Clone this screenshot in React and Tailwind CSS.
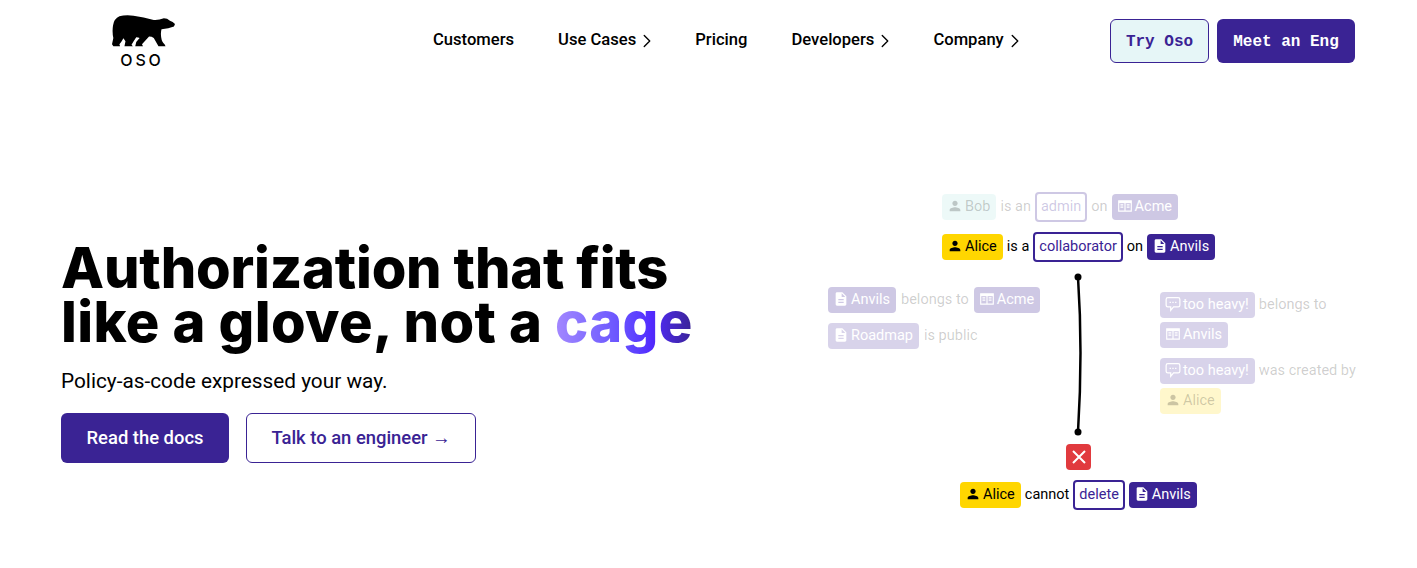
import { ChevronRight } from 'lucide-react';
import { MdPerson, MdDescription } from 'react-icons/md';

const navItems = [
  { label: 'Customers' },
  { label: 'Use Cases', more: true },
  { label: 'Pricing' },
  { label: 'Developers', more: true },
  { label: 'Company', more: true },
];

const chipStyles = {
  actor: 'bg-[#ffd600] text-black',
  actorFaded: 'bg-[#ffd600]/20 text-black/20',
  actorMint: 'bg-[#e6f6f5]/70 text-black/20',
  resource: 'bg-[#3a2394] text-white',
  resourceFaded: 'bg-[#3a2394]/25 text-white',
  resourcePale: 'bg-[#3a2394]/20 text-white',
};

// two pane book used for organizations
function OrgIcon({ size, className }) {
  return (
    <svg viewBox="0 0 14 14" width={size} height={size} className={className} fill="none" stroke="currentColor" strokeWidth="1">
      <path d="M1.5 2.5 H12.5 V11.5 H1.5 Z M7 2.5 V11.5 M8.5 6 H11 M8.5 8 H11 M3 6 H5.5 M3 8 H5.5" />
      <path d="M1.5 3.5 H12.5" strokeWidth="2" />
    </svg>
  );
}

function CommentIcon({ size, className }) {
  return (
    <svg viewBox="0 0 14 14" width={size} height={size} className={className} fill="none" stroke="currentColor" strokeWidth="1.1">
      <path d="M2.5 1.5 H11.5 Q13 1.5 13 3 V8 Q13 9.5 11.5 9.5 H7.5 L5 12.5 V9.5 H2.5 Q1 9.5 1 8 V3 Q1 1.5 2.5 1.5 Z" />
      <path d="M4 5.5 H10" strokeDasharray="1.2 1.2" />
    </svg>
  );
}

function Chip({ icon: Icon, kind, children }) {
  return (
    <span className={`inline-flex h-[26px] items-center gap-[2px] rounded-[4px] pr-[6px] pl-[5px] text-[14.5px] leading-none ${chipStyles[kind]}`}>
      <Icon size={16} className="-mt-[3px] shrink-0" />
      {children}
    </span>
  );
}

function Role({ faded, children }) {
  return (
    <span className={`inline-flex h-[30px] items-center rounded-[4px] border-2 bg-white px-[4px] text-[14.5px] ${faded ? 'border-[#3a2394]/25 text-[#3a2394]/25' : 'border-[#3a2394] text-[#3a2394]'}`}>
      {children}
    </span>
  );
}

function Word({ faded, children }) {
  return <span className={`text-[14.5px] ${faded ? 'text-black/20' : 'text-black'}`}>{children}</span>;
}

function BearLogo() {
  return (
    <svg viewBox="66 44 190 95" className="h-[32px] w-[64px]" fill="black">
      <path d="M253 71 Q247 64 238 61 Q230 54 220 54 Q205 60 190 59 Q160 50 130 46 Q105 43 88 48 Q72 55 69 75 Q66 95 70 112 L66 131 L70 137 L90 137 L88 131 Q94 124 100 113 L106 122 L103 137 L128 137 L124 132 Q130 122 138 110 Q144 110 148 112 L138 124 L135 137 L158 137 L155 131 L176 108 Q184 108 190 112 L204 137 L225 137 L222 131 Q214 125 212 110 Q210 96 213 86 L233 83 L250 78 Z" />
    </svg>
  );
}

function Header() {
  return (
    <header className="flex h-[82px] items-start pl-[112px] pr-[62px]">
      <div className="flex w-[321px] flex-col pt-[15px]">
        <div className="w-[64px]">
          <BearLogo />
          <div className="mt-[4px] pr-[4px] text-center font-['Inter',sans-serif] text-[16px] leading-[18px] font-medium tracking-[0.18em] text-black">OSO</div>
        </div>
      </div>
      <nav className="flex items-center gap-11 pt-[30px] text-[16.6px] leading-[19px] font-medium text-black">
        {navItems.map((item) => (
          <span key={item.label} className="flex h-[19px] items-center">
            {item.label}
            {item.more && <ChevronRight size={22} strokeWidth={1.5} className="mt-[3px] -mr-[7px]" />}
          </span>
        ))}
      </nav>
      <div className="ml-auto flex gap-2 pt-[19px] font-['Liberation_Mono',monospace] text-base font-bold">
        <button className="h-[44px] w-[99px] rounded-[6px] border border-[#3a2394] bg-[#e6f6f7] pt-[2px] text-[#3a2394]">Try Oso</button>
        <button className="h-[44px] w-[138px] rounded-[6px] bg-[#3a2394] pt-[2px] text-white">Meet an Eng</button>
      </div>
    </header>
  );
}

function Hero() {
  return (
    <section className="w-[828px] pt-[159px] pl-[61px]">
      <h1 className="font-['Inter',sans-serif] text-[56px] leading-[54px] font-extrabold text-black">
        <span className="tracking-[-0.2px]">Authorization that fits</span>
        <br />
        <span className="tracking-[0.4px]">
          like a glove, not a{' '}
          <span className="bg-gradient-to-r from-[#a488ff] via-[#5229ff] via-70% to-[#3a2394] bg-clip-text text-transparent">cage</span>
        </span>
      </h1>
      <p className="mt-[17px] text-[20.8px] leading-[30px] text-black">Policy-as-code expressed your way.</p>
      <div className="mt-[17px] flex gap-[17px] text-[18.4px] font-medium">
        <button className="h-[50px] w-[168px] rounded-[6px] bg-[#3a2394] text-white">Read the docs</button>
        <button className="h-[50px] w-[230px] rounded-[6px] border border-[#3a2394] bg-white text-[#3a2394]">Talk to an engineer →</button>
      </div>
    </section>
  );
}

function Diagram() {
  return (
    <section className="w-[530px] pt-[110px]">
      <div className="pl-[114px]">
        <div className="flex h-[30px] items-center gap-[4px]">
          <Chip icon={MdPerson} kind="actorMint">Bob</Chip>
          <Word faded>is an</Word>
          <Role faded>admin</Role>
          <Word faded>on</Word>
          <Chip icon={OrgIcon} kind="resourceFaded">Acme</Chip>
        </div>
        <div className="mt-[10px] flex h-[30px] items-center gap-[4px]">
          <Chip icon={MdPerson} kind="actor">Alice</Chip>
          <Word>is a</Word>
          <Role>collaborator</Role>
          <Word>on</Word>
          <Chip icon={MdDescription} kind="resource">Anvils</Chip>
        </div>
      </div>

      <div className="mt-[10px] flex">
        <div className="w-[240px] pt-[15px]">
          <div className="flex items-center gap-[5px]">
            <Chip icon={MdDescription} kind="resourceFaded">Anvils</Chip>
            <Word faded>belongs to</Word>
            <Chip icon={OrgIcon} kind="resourceFaded">Acme</Chip>
          </div>
          <div className="mt-[10px] flex items-center gap-[5px]">
            <Chip icon={MdDescription} kind="resourcePale">Roadmap</Chip>
            <Word faded>is public</Word>
          </div>
        </div>
        <svg viewBox="0 0 20 164" className="h-[164px] w-[20px] shrink-0" fill="black">
          <path d="M10 5 Q15 80 10 160" fill="none" stroke="black" strokeWidth="2.5" />
          <circle cx="10" cy="5" r="3.5" />
          <circle cx="10" cy="160" r="3.5" />
        </svg>
        <div className="ml-[72px] w-[198px] pt-[20px]">
          <div className="flex items-center gap-[4px]">
            <Chip icon={CommentIcon} kind="resourcePale">too heavy!</Chip>
            <Word faded>belongs to</Word>
          </div>
          <div className="mt-[4px] flex">
            <Chip icon={OrgIcon} kind="resourcePale">Anvils</Chip>
          </div>
          <div className="mt-[10px] flex items-center gap-[4px]">
            <Chip icon={CommentIcon} kind="resourcePale">too heavy!</Chip>
            <Word faded>was created by</Word>
          </div>
          <div className="mt-[4px] flex">
            <Chip icon={MdPerson} kind="actorFaded">Alice</Chip>
          </div>
        </div>
      </div>

      <div className="mt-[8px] pl-[238px]">
        <div className="flex h-[26px] w-[25px] items-center justify-center rounded-[4px] bg-[#e13a3e]">
          <svg viewBox="0 0 14 14" className="h-[14px] w-[14px]" fill="none" stroke="white" strokeWidth="2">
            <path d="M1 1 L13 13 M13 1 L1 13" />
          </svg>
        </div>
      </div>

      <div className="mt-[10px] flex h-[30px] items-center gap-[4px] pl-[132px]">
        <Chip icon={MdPerson} kind="actor">Alice</Chip>
        <Word>cannot</Word>
        <Role>delete</Role>
        <Chip icon={MdDescription} kind="resource">Anvils</Chip>
      </div>
    </section>
  );
}

export default function App() {
  return (
    <div className="h-[568px] overflow-hidden bg-white font-['Roboto',sans-serif]">
      <Header />
      <main className="flex">
        <Hero />
        <Diagram />
      </main>
    </div>
  );
}
